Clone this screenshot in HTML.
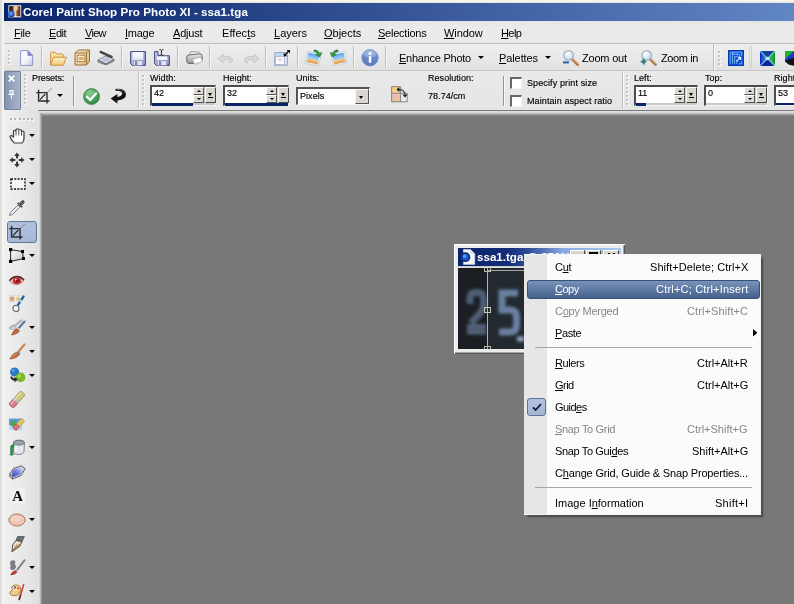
<!DOCTYPE html>
<html>
<head>
<meta charset="utf-8">
<title>Corel Paint Shop Pro Photo XI - ssa1.tga</title>
<style>
html,body{margin:0;padding:0;}
html{width:794px;height:604px;overflow:hidden;}
body{width:794px;height:604px;overflow:hidden;position:relative;background:#787878;font-family:"Liberation Sans",sans-serif;font-size:11px;color:#000;}
.abs{position:absolute;}
svg{position:absolute;overflow:visible;}
.t{position:absolute;white-space:nowrap;line-height:13px;}
.s{position:absolute;white-space:nowrap;line-height:11px;font-size:9px;letter-spacing:0.05px;}
u{text-decoration:underline;text-underline-offset:1px;text-decoration-thickness:1px;}
/* frame */
#frameL{left:0;top:0;width:4px;height:604px;background:linear-gradient(to right,#dcdcdc 0,#e0e0e0 45%,#f6f6f0 55%,#f2f2ec 100%);}
#frameT{left:0;top:0;width:794px;height:3px;background:linear-gradient(#fbf8ee 0,#f4f0e4 50%,#dfe3ee 100%);}
/* title */
#title{left:4px;top:3px;width:790px;height:18px;background:linear-gradient(to right,#0a246a 0%,#6186c4 100%);}
#title .t{left:19px;top:2px;color:#fff;font-weight:bold;font-size:11.6px;line-height:14px;letter-spacing:0.05px;}
/* menu */
#menu{left:4px;top:21px;width:790px;height:23px;background:linear-gradient(#e6e6e6,#ebebeb 30%,#eaeaea);}
#menu .t{top:5.6px;}
/* toolbar */
#tb{left:4px;top:43px;width:790px;height:27px;background:linear-gradient(#bdbdbd 0,#bdbdbd 1px,#eeeeee 1px,#e9e9e9 50%,#e2e2e2 100%);}
.sep{position:absolute;top:46px;width:1px;height:22px;background:#bcbcbc;box-shadow:1px 0 0 #f8f8f8;}
.gripv{position:absolute;width:2px;}
.gripv i{display:block;width:2px;height:2px;background:#c6c6c6;margin-bottom:2px;box-shadow:1px 1px 0 #fcfcfc;}
.griph{position:absolute;height:2px;white-space:nowrap;font-size:0;}
.griph i{display:inline-block;width:2px;height:2px;background:#b4b4b4;margin-right:2.3px;box-shadow:1px 1px 0 #fafafa;}
.arr{position:absolute;width:0;height:0;border-left:3px solid transparent;border-right:3px solid transparent;border-top:3px solid #000;}
/* options */
#opt{left:4px;top:70px;width:790px;height:40px;background:linear-gradient(#c8c8c8 0,#c8c8c8 1px,#e9e9e9 1px,#e5e5e5 100%);}
#handle{left:4px;top:71px;width:17px;height:39px;background:linear-gradient(to right,#8393ae,#9ba8bf 60%,#a9b4c7);border:1px solid #73849f;box-sizing:border-box;border-radius:1px;}
.osep{position:absolute;top:76px;width:1px;height:30px;background:#949494;box-shadow:1px 0 0 #f8f8f8;}
/* numeric field */
.nf{position:absolute;top:85px;height:21px;background:#c8c8c8;box-sizing:border-box;border-top:2px solid #4c4c4c;border-left:2px solid #4c4c4c;border-right:1px solid #f4f4f4;border-bottom:1px solid #f4f4f4;}
.nf .w{position:absolute;left:0;top:0;height:16px;background:#fff;}
.nf .bar{position:absolute;left:0;top:16px;height:3px;background:#0a246a;}
.nf .v{position:absolute;left:2px;top:1px;font-size:9px;line-height:11px;}
.nf .sp{position:absolute;top:0;width:11px;height:7.5px;background:#dedbd4;border:1px solid #fff;border-right-color:#555;border-bottom-color:#555;box-sizing:border-box;}
.nf .sp.d{top:8px;height:8px;}
.nf .dd{position:absolute;top:0;width:11px;height:16px;background:#d8d5ce;border:1px solid #fff;border-right:1.5px solid #444;border-bottom:1.5px solid #444;box-sizing:border-box;}
.tri-u{position:absolute;width:0;height:0;border-left:2px solid transparent;border-right:2px solid transparent;border-bottom:2px solid #000;}
.tri-d{position:absolute;width:0;height:0;border-left:2px solid transparent;border-right:2px solid transparent;border-top:2px solid #000;}
.cb{position:absolute;width:12px;height:12px;background:#fff;box-sizing:border-box;border-top:2px solid #666;border-left:2px solid #666;border-right:1px solid #f4f4f4;border-bottom:1px solid #f4f4f4;}
/* below */
#gap{left:38px;top:111px;width:756px;height:5px;background:linear-gradient(#e4e4e4 0,#d6d6d6 30%,#b0b0b0 60%,#8a8a8a 85%,#787878 100%);}
#left{left:4px;top:110px;width:34px;height:494px;background:linear-gradient(to right,#f0f0f0,#e9e9e9 50%,#e0e0e0);}
#leftE{left:38px;top:113px;width:4px;height:491px;background:linear-gradient(to right,#e8e8e8,#d8d8d8 35%,#acacac 70%,#848484 100%);}
#ws{left:41px;top:115px;width:753px;height:489px;background:#787878;}
#sel{left:7px;top:221px;width:30px;height:22px;background:linear-gradient(#aec0dc,#a6b8d6);border:1px solid #61779a;border-radius:3px;box-sizing:border-box;}
/* child window */
#cw{left:454px;top:244px;width:171px;height:110px;background:#ececec;box-shadow:inset 1px 1px 0 #fff,inset -1px -1px 0 #585858,inset -2px -2px 0 #a8a8a8;}
#cwt{left:458px;top:248px;width:163px;height:18px;overflow:hidden;background:linear-gradient(to right,#0a246a 0%,#142c78 30%,#2c4894 42%,#5070b8 52%,#8aa8e0 64%,#a6caf0 100%);}
#cwt .t{left:19px;top:2px;color:#fff;font-weight:bold;font-size:11.6px;line-height:14px;}
#cwi{left:458px;top:268px;width:163px;height:81px;background:#1a2026;overflow:hidden;}
.wb{position:absolute;top:250px;height:14px;background:#d8d4cc;box-sizing:border-box;border:1px solid #fff;border-right-color:#404040;border-bottom-color:#404040;}
/* context menu */
#cm{left:524px;top:254px;width:237px;height:261px;background:#fbfbfb;box-shadow:2.5px 2.5px 1.5px #505050;border:1px solid #f4f4f4;box-sizing:border-box;}
#cmg{left:524px;top:255px;width:23px;height:259px;background:#e6e6e6;}
#hl{left:527px;top:280px;width:232.5px;height:19px;background:linear-gradient(#7891b7,#617da6 45%,#46628c);border:1px solid #38507a;border-radius:3px;box-sizing:border-box;}
.mi{position:absolute;left:555px;white-space:nowrap;line-height:13px;margin-top:0.6px;}
.mk{position:absolute;right:46px;white-space:nowrap;line-height:13px;text-align:right;margin-top:0.6px;}
.dis{color:#868686;}
.msep{position:absolute;left:535px;width:217px;height:1px;background:#a6a6a6;}
#chk{left:527px;top:398px;width:19px;height:18px;background:linear-gradient(#b4c2dc,#a6b6d2);border:1px solid #5a729a;border-radius:3px;box-sizing:border-box;}
.t,.s,.mi,.mk,.nf .v{will-change:transform;}
.s,.nf .v{-webkit-text-stroke:0.15px #000;}
</style>
</head>
<body>
<div id="ws" class="abs"></div>
<div id="gap" class="abs"></div>
<div id="frameT" class="abs"></div>
<div id="title" class="abs"><span class="t">Corel Paint Shop Pro Photo XI - ssa1.tga</span></div>
<div id="menu" class="abs">
 <span class="t" style="left:10px;letter-spacing:-0.3px"><u>F</u>ile</span>
 <span class="t" style="left:44.5px;letter-spacing:-0.45px"><u>E</u>dit</span>
 <span class="t" style="left:81px;letter-spacing:-0.7px"><u>V</u>iew</span>
 <span class="t" style="left:120.5px;letter-spacing:-0.25px"><u>I</u>mage</span>
 <span class="t" style="left:169.3px;letter-spacing:-0.2px"><u>A</u>djust</span>
 <span class="t" style="left:217.6px;letter-spacing:0.05px">Effec<u>t</u>s</span>
 <span class="t" style="left:269.5px"><u>L</u>ayers</span>
 <span class="t" style="left:319.5px"><u>O</u>bjects</span>
 <span class="t" style="left:374px;letter-spacing:-0.23px"><u>S</u>elections</span>
 <span class="t" style="left:440px;letter-spacing:-0.1px"><u>W</u>indow</span>
 <span class="t" style="left:496.7px;letter-spacing:-0.6px"><u>H</u>elp</span>
</div>
<div id="tb" class="abs"></div>
<svg style="left:7px;top:4.5px" width="15" height="13" viewBox="0 0 15 13"><defs><linearGradient id="gApp" x1="0" y1="0" x2="1" y2="0"><stop offset="0" stop-color="#2a1a12"/><stop offset="0.3" stop-color="#4a2c1c"/><stop offset="0.45" stop-color="#e8c4bc"/><stop offset="0.7" stop-color="#e8cc98"/><stop offset="0.85" stop-color="#7a4a20"/><stop offset="1" stop-color="#5a3414"/></linearGradient><radialGradient id="gOrb" cx="0.45" cy="0.45" r="0.6"><stop offset="0" stop-color="#6aa8ff"/><stop offset="0.6" stop-color="#2a68e8"/><stop offset="1" stop-color="#0c2060"/></radialGradient></defs><rect x="1.4" y="0.3" width="12.8" height="12" fill="#fff"/><rect x="2.2" y="1.1" width="11.2" height="10.2" fill="url(#gApp)"/><rect x="9.4" y="5.2" width="3.6" height="6" fill="#6a3c18" opacity="0.8"/><circle cx="4.3" cy="8.9" r="3.2" fill="url(#gOrb)"/></svg>
<!--TBICONS2-->
<!-- toolbar separators / grips / text -->
<div class="gripv" style="left:8px;top:50px"><i></i><i></i><i></i><i></i></div>
<div class="sep" style="left:41px"></div>
<div class="sep" style="left:121px"></div>
<div class="sep" style="left:177px"></div>
<div class="sep" style="left:209px"></div>
<div class="sep" style="left:265px"></div>
<div class="sep" style="left:297px"></div>
<div class="sep" style="left:353px"></div>
<div class="sep" style="left:385px"></div>
<div class="sep" style="left:713px;top:44px;height:26px"></div>
<div class="gripv" style="left:718px;top:51px"><i></i><i></i><i></i><i></i></div>
<div class="sep" style="left:748.5px;background:#d6d6d6;box-shadow:none"></div><div class="sep" style="left:751px;background:#d0d0d0;box-shadow:none"></div>
<span class="t" id="tEnh" style="left:399px;top:51.7px;letter-spacing:-0.25px"><u>E</u>nhance Photo</span>
<div class="arr" style="left:477.5px;top:55.5px"></div>
<span class="t" id="tPal" style="left:499.3px;top:51.7px;letter-spacing:-0.1px"><u>P</u>alettes</span>
<div class="arr" style="left:544.7px;top:55.5px"></div>
<span class="t" id="tZo" style="left:582.3px;top:51.7px;letter-spacing:-0.2px">Zoom out</span>
<span class="t" id="tZi" style="left:660.5px;top:51.7px;letter-spacing:-0.4px">Zoom in</span>
<svg width="0" height="0" style="position:absolute"><defs>
 <linearGradient id="gPage" x1="0" y1="0" x2="1" y2="1"><stop offset="0" stop-color="#ffffff"/><stop offset="0.5" stop-color="#f8f9fe"/><stop offset="1" stop-color="#c4cbee"/></linearGradient>
 <linearGradient id="gFold" x1="0" y1="0" x2="0" y2="1"><stop offset="0" stop-color="#fdf0c0"/><stop offset="1" stop-color="#f4cc80"/></linearGradient>
 <linearGradient id="gBox" x1="0" y1="0" x2="1" y2="1"><stop offset="0" stop-color="#f8e8c4"/><stop offset="1" stop-color="#d8b478"/></linearGradient>
 <linearGradient id="gFlop" x1="0" y1="0" x2="1" y2="1"><stop offset="0" stop-color="#c4cae8"/><stop offset="1" stop-color="#9098c8"/></linearGradient>
 <linearGradient id="gPrn" x1="0" y1="0" x2="0" y2="1"><stop offset="0" stop-color="#ececec"/><stop offset="1" stop-color="#989898"/></linearGradient>
 <linearGradient id="gInfo" x1="0" y1="0" x2="0" y2="1"><stop offset="0" stop-color="#9cb4e0"/><stop offset="0.5" stop-color="#6888c8"/><stop offset="1" stop-color="#5878bc"/></linearGradient>
 <linearGradient id="gSky" x1="0" y1="0" x2="0" y2="1"><stop offset="0" stop-color="#5aa0e8"/><stop offset="0.55" stop-color="#a8d4f4"/><stop offset="0.6" stop-color="#f0c890"/><stop offset="1" stop-color="#e09850"/></linearGradient>
 <radialGradient id="gGlass" cx="0.4" cy="0.35" r="0.7"><stop offset="0" stop-color="#ffffff"/><stop offset="1" stop-color="#b9d6ee"/></radialGradient>
 <linearGradient id="gHand" x1="0" y1="0" x2="1" y2="1"><stop offset="0" stop-color="#f0c090"/><stop offset="1" stop-color="#b87840"/></linearGradient>
 <radialGradient id="gChk" cx="0.4" cy="0.3" r="0.8"><stop offset="0" stop-color="#8cd098"/><stop offset="0.6" stop-color="#48a058"/><stop offset="1" stop-color="#2e7c3e"/></radialGradient>
</defs></svg>
<!-- new -->
<svg style="left:20px;top:50px" width="14" height="16" viewBox="0 0 14 16"><path d="M0.6 0.6 H7.8 L12.6 5.4 V15.4 H0.6 Z" fill="url(#gPage)" stroke="#8e98c8" stroke-width="1"/><path d="M7.8 0.6 V5.4 H12.6 Z" fill="#8088cc" stroke="#7880c4" stroke-width="0.6"/></svg>
<!-- open -->
<svg style="left:50px;top:51px" width="17" height="15" viewBox="0 0 17 15"><path d="M0.6 14 V2.2 Q0.6 1.2 1.6 1.2 H5.2 L6.8 3 H12.4 Q13.2 3 13.2 3.8 V6" fill="#f8e0a0" stroke="#cf9448" stroke-width="1"/><path d="M0.6 14.2 L3.4 6.2 H16.3 L13.4 14.2 Z" fill="url(#gFold)" stroke="#cf8c40" stroke-width="1"/></svg>
<!-- browse -->
<svg style="left:74px;top:49px" width="17" height="17" viewBox="0 0 17 17"><path d="M1 4 L4.5 1 H15.5 L15.5 12.5 L12.5 16 H1 Z" fill="url(#gBox)" stroke="#9a7236" stroke-width="1"/><path d="M1 4 H12.5 V16 M12.5 4 L15.5 1" fill="none" stroke="#9a7236" stroke-width="0.9"/><rect x="3.2" y="6.2" width="7.6" height="6.4" fill="#f8ecd0" stroke="#a47a3c" stroke-width="0.8"/><rect x="4.8" y="8" width="4.6" height="3" fill="#e8a860"/></svg>
<!-- scanner -->
<svg style="left:97px;top:50px" width="18" height="15" viewBox="0 0 18 15"><path d="M3.5 1 L15.5 6.5 L14.5 8 L2.8 2.4 Z" fill="#50525a" stroke="#2c2e34" stroke-width="0.8"/><path d="M1 10 L8.5 6.2 L17 9.2 L9 13.8 Z" fill="#e8e8ec" stroke="#6c6e78" stroke-width="0.8"/><path d="M1 10 V12 L9 15 L17 11 V9.2 L9 13.8 Z" fill="#9c9ea8" stroke="#5c5e66" stroke-width="0.7"/><path d="M4 10 L8.6 7.6 L13.6 9.4 L9 11.9 Z" fill="#b4c0d8"/></svg>
<!-- save -->
<svg style="left:129.5px;top:51px" width="16" height="15" viewBox="0 0 16 15"><path d="M0.6 0.6 H15.4 V14.4 H2.4 L0.6 12.6 Z" fill="url(#gFlop)" stroke="#30386c" stroke-width="0.9"/><rect x="2.6" y="1" width="10.6" height="7.8" fill="#f4f5fc"/><rect x="2.6" y="6.6" width="10.6" height="2.2" fill="#dfe2f4"/><rect x="3.6" y="9.8" width="8.8" height="4.6" fill="#e2e4f2" stroke="#8088b8" stroke-width="0.5"/><rect x="5" y="10.4" width="2.2" height="3.6" fill="#7880b0"/></svg>
<!-- save as -->
<svg style="left:153.5px;top:49px" width="16" height="17" viewBox="0 0 16 17"><path d="M0.6 2.6 H4 V6.8 H15.4 V16.4 H2.4 L0.6 14.6 Z" fill="url(#gFlop)" stroke="#30386c" stroke-width="0.9"/><rect x="3" y="7.4" width="10.2" height="3.6" fill="#f4f5fc"/><rect x="3.6" y="11.8" width="8.8" height="4.6" fill="#e2e4f2" stroke="#8088b8" stroke-width="0.5"/><rect x="5" y="12.4" width="2.2" height="3.6" fill="#7880b0"/><path d="M5.4 0.7 H6.8 M8 0.7 H9.4 M7.4 1 V6 M5.4 6.3 H6.8 M8 6.3 H9.4" stroke="#111" stroke-width="0.9" fill="none"/></svg>
<!-- print -->
<svg style="left:186px;top:51px" width="17" height="14" viewBox="0 0 17 14"><path d="M4.5 0.8 L12.5 0.8 L15 4 L3 5.5 Z" fill="#f0f0f0" stroke="#808080" stroke-width="0.7"/><path d="M0.8 6 Q0.8 4.2 3 4 L13 2.8 Q16.2 2.8 16.2 5 V9 L11 12.4 H3 Q0.8 12.4 0.8 10 Z" fill="url(#gPrn)" stroke="#5c5c5c" stroke-width="0.9"/><path d="M6.5 8.2 L14.8 6 L16.4 10.4 L8.6 13.4 Z" fill="#fdfdfd" stroke="#a0a0a0" stroke-width="0.7"/></svg>
<!-- undo / redo (disabled) -->
<svg style="left:217px;top:53px" width="17" height="11" viewBox="0 0 17 11"><path d="M0.8 5.8 L6 1 V3.6 Q15 2.4 15.6 7 Q15.8 9.6 12 10 Q14 8.6 12.4 7.2 Q10.4 6 6 7.4 V10 Z" fill="#d9d9d9" stroke="#c2c2c2" stroke-width="0.8"/></svg>
<svg style="left:242.5px;top:53px" width="17" height="11" viewBox="0 0 17 11"><path d="M16.2 5.8 L11 1 V3.6 Q2 2.4 1.4 7 Q1.2 9.6 5 10 Q3 8.6 4.6 7.2 Q6.6 6 11 7.4 V10 Z" fill="#d9d9d9" stroke="#c2c2c2" stroke-width="0.8"/></svg>
<!-- resize -->
<svg style="left:273.5px;top:49px" width="17" height="17" viewBox="0 0 17 17"><rect x="0.8" y="3.6" width="12.6" height="12.6" fill="#dce8f8" stroke="#8c9cc4" stroke-width="0.9"/><rect x="1.4" y="4.2" width="11.4" height="2.6" fill="#bcd0f0"/><rect x="1.6" y="7.4" width="8.8" height="8.2" fill="#fcfcfd" stroke="#a0acc8" stroke-width="0.8"/><path d="M3.4 9.6 L8.4 9.6 L5.9 12.8Z" fill="#d4d4d8"/><path d="M10.4 6.6 L15.4 1.4" stroke="#000" stroke-width="1.3"/><path d="M12.6 1 H16 V4.4 Z M9.8 3.8 V7.2 H13.2 Z" fill="#000"/></svg>
<!-- rotate right -->
<svg style="left:305px;top:49px" width="18" height="17" viewBox="0 0 18 17"><g transform="rotate(12 8 10)"><rect x="1" y="3.6" width="14" height="12" fill="#f4f8fc" stroke="#b4c4d8" stroke-width="0.7"/><rect x="2.2" y="4.8" width="11.6" height="9.6" fill="url(#gSky)"/></g><path d="M9 0.8 Q13.4 1 14.4 4.2 L16.8 3.6 L14.8 8 L10.6 5.6 L12.6 5 Q11.8 2.8 9 2.8 Z" fill="#2f9a3c" stroke="#1e6e2a" stroke-width="0.5"/></svg>
<!-- rotate left -->
<svg style="left:329px;top:49px" width="18" height="17" viewBox="0 0 18 17"><g transform="translate(18,0) scale(-1,1)"><g transform="rotate(12 8 10)"><rect x="1" y="3.6" width="14" height="12" fill="#f4f8fc" stroke="#b4c4d8" stroke-width="0.7"/><rect x="2.2" y="4.8" width="11.6" height="9.6" fill="url(#gSky)"/></g><path d="M9 0.8 Q13.4 1 14.4 4.2 L16.8 3.6 L14.8 8 L10.6 5.6 L12.6 5 Q11.8 2.8 9 2.8 Z" fill="#2f9a3c" stroke="#1e6e2a" stroke-width="0.5"/></g></svg>
<!-- info -->
<svg style="left:361px;top:49px" width="18" height="18" viewBox="0 0 18 18"><circle cx="9" cy="8.8" r="8.2" fill="url(#gInfo)" stroke="#6d89c4" stroke-width="0.8"/><ellipse cx="9" cy="5" rx="6" ry="3.6" fill="#a9bfe6" opacity="0.55"/><rect x="7.8" y="7.2" width="2.5" height="6.6" rx="0.6" fill="#fff"/><circle cx="9" cy="4.6" r="1.5" fill="#fff"/></svg>
<!-- zoom out -->
<svg style="left:561.5px;top:50px" width="17" height="16" viewBox="0 0 17 16"><path d="M9.6 8.6 L15.6 14.6" stroke="#b0703c" stroke-width="2.6" stroke-linecap="round"/><path d="M9.8 8.2 L15 13.4" stroke="#e8b080" stroke-width="0.9" stroke-linecap="round"/><circle cx="6.6" cy="5.4" r="4.8" fill="url(#gGlass)" stroke="#a9b1bd" stroke-width="1.3"/><rect x="1" y="11.4" width="6" height="2" fill="#2a5ea8"/></svg>
<!-- zoom in -->
<svg style="left:640px;top:50px" width="17" height="16" viewBox="0 0 17 16"><path d="M9.6 8.6 L15.6 14.6" stroke="#b0703c" stroke-width="2.6" stroke-linecap="round"/><path d="M9.8 8.2 L15 13.4" stroke="#e8b080" stroke-width="0.9" stroke-linecap="round"/><circle cx="6.6" cy="5.4" r="4.8" fill="url(#gGlass)" stroke="#a9b1bd" stroke-width="1.3"/><path d="M0.8 11.6 H6.4 M3.6 8.8 V14.4" stroke="#1e7a7a" stroke-width="1.9"/></svg>
<!-- circuit icon -->
<svg style="left:728px;top:49.7px" width="16" height="16" viewBox="0 0 16 16"><rect x="0" y="0" width="16" height="16" fill="#0e4cd4"/><rect x="0.4" y="0.4" width="15.2" height="15.2" fill="none" stroke="#0a34a8" stroke-width="0.8"/><path d="M2.2 13.8 V2.2 H13.8 V6 M4.4 13.8 V4.4 H9 M11 4.4 H11.6 V6.4 M6.6 13.8 V6.6 H9.4 L10.6 7.8 M8.8 13.8 V11 M11 13.8 H13.8 V11.4" fill="none" stroke="#7cc0fa" stroke-width="0.9"/><path d="M8.4 11.4 L12.2 7.6 M10 7.4 H12.6 V10" fill="none" stroke="#e4f2ff" stroke-width="1.3"/><circle cx="5" cy="3.4" r="0.7" fill="#b8dcff"/><circle cx="9.6" cy="4.4" r="0.8" fill="#b8dcff"/></svg>
<!-- blue/green X -->
<svg style="left:760px;top:51px" width="15" height="15" viewBox="0 0 15 15"><defs><linearGradient id="gXl" x1="0" y1="0" x2="1" y2="0"><stop offset="0" stop-color="#1420c0"/><stop offset="1" stop-color="#38b8e8"/></linearGradient><linearGradient id="gXr" x1="0" y1="0" x2="1" y2="0"><stop offset="0" stop-color="#48d0a0"/><stop offset="1" stop-color="#109018"/></linearGradient></defs><rect width="15" height="15" fill="#0c2090"/><path d="M0 0 L7.5 7.5 L15 0 Z" fill="#104098"/><path d="M0 15 L7.5 7.5 L15 15 Z" fill="#0c2494"/><path d="M0 0 L7.5 7.5 L0 15 Z" fill="url(#gXl)"/><path d="M15 0 L7.5 7.5 L15 15 Z" fill="url(#gXr)"/><path d="M0 0 L15 15 M15 0 L0 15" stroke="#8cf0f8" stroke-width="1.2" opacity="0.75"/><circle cx="7.5" cy="7.5" r="1.8" fill="#e0ffff" opacity="0.85"/></svg>
<!-- third icon (cropped) -->
<svg style="left:785px;top:50.5px" width="9" height="15" viewBox="0 0 9 15"><rect x="0" y="0" width="12" height="10.5" fill="#1838d0"/><path d="M0 0 H9 L0 8 Z" fill="#20b030"/><path d="M0 10 L4 8 L12 6 V15 Q4 15 0 10.5 Z" fill="#10141c"/></svg>


<div id="opt" class="abs"></div>
<div id="handle" class="abs"></div>
<!-- options bar -->
<svg style="left:8px;top:75px" width="7" height="7" viewBox="0 0 7 7"><path d="M0.7 0.7 L6.3 6.3 M6.3 0.7 L0.7 6.3" stroke="#fff" stroke-width="1.7" fill="none"/></svg>
<svg style="left:8px;top:90px" width="7" height="9" viewBox="0 0 7 9"><path d="M1.5 0.5 H5.5 M2 0.5 V4 M5 0.5 V4 M4 0.5 V4 M0.5 4.5 H6.5 M3.5 4.5 V8.5" stroke="#fff" stroke-width="1" fill="none"/></svg>
<div class="gripv" style="left:24px;top:74px"><i></i><i></i><i></i><i></i><i></i><i></i><i></i><i></i></div>
<span class="s" id="sPre" style="left:31.5px;top:73px;letter-spacing:-0.1px">Presets:</span>
<div class="arr" style="left:56.5px;top:94px"></div>
<div class="osep" style="left:73px"></div>
<div class="sep" style="left:138px;top:71px;height:37px;background:#c0c0c0"></div>
<div class="gripv" style="left:142px;top:75px"><i></i><i></i><i></i><i></i><i></i><i></i><i></i><i></i></div>
<span class="s" id="sWid" style="left:150px;top:73px">Width:</span>
<div class="nf" style="left:150px;width:66px"><div class="w" style="width:41px"></div><div class="bar" style="width:41px"></div><span class="v">42</span>
 <div class="sp" style="left:41px"><div class="tri-u" style="left:2.5px;top:2px"></div></div><div class="sp d" style="left:41px"><div class="tri-d" style="left:2.5px;top:2px"></div></div>
 <div class="dd" style="left:53px"><div class="tri-d" style="left:2px;top:5px;border-left-width:2.5px;border-right-width:2.5px;border-top-width:3px"></div><div class="abs" style="left:2px;top:9px;width:5px;height:1px;background:#000"></div></div></div>
<span class="s" id="sHei" style="left:223px;top:73px">Height:</span>
<div class="nf" style="left:223px;width:66px"><div class="w" style="width:41px"></div><div class="bar" style="width:63px"></div><span class="v">32</span>
 <div class="sp" style="left:41px"><div class="tri-u" style="left:2.5px;top:2px"></div></div><div class="sp d" style="left:41px"><div class="tri-d" style="left:2.5px;top:2px"></div></div>
 <div class="dd" style="left:53px"><div class="tri-d" style="left:2px;top:5px;border-left-width:2.5px;border-right-width:2.5px;border-top-width:3px"></div><div class="abs" style="left:2px;top:9px;width:5px;height:1px;background:#000"></div></div></div>
<span class="s" id="sUni" style="left:296px;top:73px">Units:</span>
<div class="abs" style="left:296px;top:87px;width:74px;height:18px;background:#fff;box-sizing:border-box;border-top:2px solid #555;border-left:2px solid #555;border-right:1px solid #f4f4f4;border-bottom:1px solid #f4f4f4;">
 <span class="s" id="sPix" style="left:2px;top:2.2px">Pixels</span>
 <div class="abs" style="left:57px;top:0;width:14px;height:15px;background:#d9d6cf;border:1px solid #f4f4f4;border-right-color:#555;border-bottom-color:#555;box-sizing:border-box"><div class="tri-d" style="left:3px;top:6px;border-left-width:2.5px;border-right-width:2.5px;border-top-width:3px"></div></div>
</div>
<span class="s" id="sRes" style="left:427.5px;top:73px">Resolution:</span>
<span class="s" id="sRv" style="left:427.5px;top:91px">78.74/cm</span>
<div class="osep" style="left:503px"></div>
<div class="cb" style="left:510px;top:77px"></div>
<div class="cb" style="left:510px;top:95px"></div>
<span class="s" id="sSpe" style="left:526.5px;top:78px;letter-spacing:0.12px">Specify print size</span>
<span class="s" id="sMai" style="left:526.5px;top:96px;letter-spacing:0.1px">Maintain aspect ratio</span>
<div class="sep" style="left:622px;top:71px;height:37px;background:#c0c0c0"></div>
<div class="gripv" style="left:626px;top:75px"><i></i><i></i><i></i><i></i><i></i><i></i><i></i><i></i></div>
<span class="s" id="sLef" style="left:634px;top:73px">Left:</span>
<div class="nf" style="left:634px;width:64px"><div class="w" style="width:38px"></div><div class="bar" style="width:10px"></div><span class="v">11</span>
 <div class="sp" style="left:38px"><div class="tri-u" style="left:2.5px;top:2px"></div></div><div class="sp d" style="left:38px"><div class="tri-d" style="left:2.5px;top:2px"></div></div>
 <div class="dd" style="left:50px"><div class="tri-d" style="left:2px;top:5px;border-left-width:2.5px;border-right-width:2.5px;border-top-width:3px"></div><div class="abs" style="left:2px;top:9px;width:5px;height:1px;background:#000"></div></div></div>
<span class="s" id="sTop" style="left:704.5px;top:73px">Top:</span>
<div class="nf" style="left:704px;width:64px"><div class="w" style="width:38px"></div><span class="v">0</span>
 <div class="sp" style="left:38px"><div class="tri-u" style="left:2.5px;top:2px"></div></div><div class="sp d" style="left:38px"><div class="tri-d" style="left:2.5px;top:2px"></div></div>
 <div class="dd" style="left:50px"><div class="tri-d" style="left:2px;top:5px;border-left-width:2.5px;border-right-width:2.5px;border-top-width:3px"></div><div class="abs" style="left:2px;top:9px;width:5px;height:1px;background:#000"></div></div></div>
<span class="s" id="sRig" style="left:774px;top:73px;width:20px;overflow:hidden">Right:</span>
<div class="nf" style="left:774px;width:20px;border-right:0;overflow:hidden"><div class="w" style="width:38px"></div><div class="bar" style="width:38px"></div><span class="v">53</span></div>
<!-- crop preset icon -->
<svg style="left:36px;top:88px" width="16" height="16" viewBox="0 0 16 16"><path d="M2.6 1.8 V13 H13.6 M0.2 4.6 H11 V15.4" fill="none" stroke="#2c2c2c" stroke-width="1.4"/><path d="M4 11.6 L9.4 6" stroke="#222" stroke-width="1.1"/><path d="M11.4 4.2 L15.8 0.2" stroke="#70747c" stroke-width="0.8"/></svg>
<!-- green check -->
<svg style="left:82.5px;top:87.5px" width="17" height="17" viewBox="0 0 17 17"><circle cx="8.5" cy="8.5" r="7.9" fill="url(#gChk)" stroke="#2e7e3e" stroke-width="0.8"/><path d="M4 8.8 L7.2 12 L13 5.4" fill="none" stroke="#fff" stroke-width="2.3" stroke-linecap="round" stroke-linejoin="round"/></svg>
<!-- reset arrow -->
<svg style="left:110px;top:88px" width="17" height="16" viewBox="0 0 17 16"><path d="M5.4 1 Q15.8 0 16 6.4 Q15.8 11.6 7.4 12.4 V15.6 L0.6 10.6 L7.4 6 V9 Q12 8.4 12.2 5.6 Q12 2.4 5.4 2.8 Z" fill="#111"/><path d="M7 1.5 Q14.6 1 15.2 5.6" fill="none" stroke="#8c8c8c" stroke-width="0.8"/></svg>
<!-- resize/resolution icon -->
<svg style="left:390.5px;top:85.5px" width="17" height="16.5" viewBox="0 0 17 16.5"><defs><linearGradient id="gOr" x1="0" y1="0" x2="1" y2="1"><stop offset="0" stop-color="#f8c468"/><stop offset="1" stop-color="#f4e49c"/></linearGradient><linearGradient id="gPk" x1="0" y1="0" x2="0.6" y2="1"><stop offset="0" stop-color="#f4b8bc"/><stop offset="1" stop-color="#e8c49c"/></linearGradient></defs><rect x="0.6" y="0.6" width="9" height="6.6" fill="url(#gOr)"/><rect x="0.6" y="7.2" width="9" height="8.6" fill="url(#gPk)"/><rect x="9.6" y="7.2" width="6.6" height="8.6" fill="#e4f0e4"/><path d="M0.6 0.6 H9.6 V7.2 H16.2 V15.8 H0.6 Z M0.6 7.2 H9.6 V15.8" fill="none" stroke="#7c7c84" stroke-width="0.9"/><path d="M7.6 3.6 Q13.6 3.4 14 8.6" fill="none" stroke="#3c4450" stroke-width="1.3"/><path d="M5.4 3.6 L8.4 1 V6.2 Z M14 11.6 L11.4 8.4 H16.6 Z" fill="#1c2028"/></svg>


<div id="left" class="abs"></div>
<div id="leftE" class="abs"></div>
<div id="sel" class="abs"></div>
<div class="griph" style="left:10px;top:118px"><i></i><i></i><i></i><i></i><i></i><i></i></div>
<!-- 1 hand -->
<svg style="left:8.6px;top:128px" width="20" height="16" viewBox="0 0 16 16" preserveAspectRatio="none"><path d="M4.2 15 Q1.4 11.4 0.8 8.6 Q0.8 7.4 1.8 7.4 Q2.8 7.6 3.6 9.6 V3.4 Q3.6 2.2 4.6 2.2 Q5.6 2.2 5.6 3.4 V2 Q5.6 0.8 6.7 0.8 Q7.8 0.8 7.8 2 V2.6 Q7.8 1.5 8.9 1.5 Q10 1.5 10 2.8 V4 Q10 3 11 3 Q12 3 12 4.2 V10.4 Q12 13.4 10.4 15 Z" fill="#fff" stroke="#3c3c3c" stroke-width="1"/><path d="M5.6 3.4 V7.4 M7.8 2.6 V7.4 M10 4 V7.6" stroke="#3c3c3c" stroke-width="0.8"/></svg>
<div class="arr" style="left:29px;top:134px"></div>
<!-- 2 move -->
<svg style="left:9px;top:152px" width="16" height="16" viewBox="0 0 16 16"><path d="M8 0.4 L10.8 4 H9 V7 H12 V5.2 L15.6 8 L12 10.8 V9 H9 V12 H10.8 L8 15.6 L5.2 12 H7 V9 H4 V10.8 L0.4 8 L4 5.2 V7 H7 V4 H5.2 Z" fill="#3a3a3a"/><rect x="6.4" y="6.4" width="3.2" height="3.2" fill="#ececec"/></svg>
<div class="arr" style="left:29px;top:158px"></div>
<!-- 3 selection -->
<svg style="left:9.5px;top:178px" width="16" height="12" viewBox="0 0 16 12"><rect x="1" y="1" width="14" height="10" fill="#f6f6f6" stroke="#111" stroke-width="1.4" stroke-dasharray="2 1.3"/></svg>
<div class="arr" style="left:29px;top:182px"></div>
<!-- 4 eyedropper -->
<svg style="left:9px;top:200px" width="16" height="16" viewBox="0 0 16 16"><path d="M0.6 15.4 L1.4 12.6 L9 5 L11 7 L3.4 14.6 Z" fill="#e8eaee" stroke="#70747c" stroke-width="0.9"/><path d="M8.4 3.6 L12.4 7.6 L13.4 6.6 L12.4 5.6 L15 3 Q15.8 1.4 14.6 0.6 Q13.4 0 12.6 1 L10.4 3.6 L9.4 2.6 Z" fill="#5c5e66" stroke="#3a3c42" stroke-width="0.6"/></svg>
<!-- 5 crop -->
<svg style="left:9.3px;top:224.2px" width="16" height="16" viewBox="0 0 16 16"><path d="M2.6 1.8 V13 H13.6 M0.2 4.6 H11 V15.4" fill="none" stroke="#2c2c2c" stroke-width="1.4"/><path d="M4 11.6 L9.4 6" stroke="#222" stroke-width="1.1"/><path d="M11.4 4.2 L15.8 0.2" stroke="#70747c" stroke-width="0.8"/></svg>
<!-- 6 deform -->
<svg style="left:9px;top:248px" width="16" height="15" viewBox="0 0 16 15"><defs><linearGradient id="gDef" x1="0" y1="0" x2="1" y2="1"><stop offset="0" stop-color="#ffffff"/><stop offset="1" stop-color="#c4c4c4"/></linearGradient></defs><path d="M1.6 1.6 L13.4 3.6 L14.6 10.6 L1.6 13.4 Z" fill="url(#gDef)" stroke="#222" stroke-width="1"/><rect x="0" y="0" width="3.2" height="3.2" fill="#000"/><rect x="12" y="2" width="3" height="3" fill="#000"/><rect x="13" y="9" width="3" height="3" fill="#000"/><rect x="0" y="11.8" width="3.2" height="3.2" fill="#000"/></svg>
<div class="arr" style="left:29px;top:254px"></div>
<!-- 7 red eye -->
<svg style="left:8.8px;top:276px" width="15.4" height="9.4" viewBox="0 0 16 11" preserveAspectRatio="none"><path d="M0.4 5.6 Q4 0.8 8.6 1 Q12.6 1.2 15.6 5 Q12 10 8 10 Q3.6 10 0.4 5.6 Z" fill="#f0d4cc" stroke="#a85c50" stroke-width="0.9"/><ellipse cx="8.2" cy="5.6" rx="4.4" ry="3.9" fill="#c02c2c"/><circle cx="8.4" cy="5.6" r="1.7" fill="#701414"/><circle cx="7" cy="4.2" r="1" fill="#f8e8e8"/><path d="M0.4 5.4 Q4 0.4 8.6 0.6 Q12.6 0.8 15.6 4.8" fill="none" stroke="#5c2424" stroke-width="1.7"/></svg>
<!-- 8 makeover -->
<svg style="left:9px;top:295px" width="16" height="17" viewBox="0 0 16 17"><rect x="0.4" y="0.8" width="12.4" height="6" fill="#f2f2f4" stroke="#c0c4d0" stroke-width="0.5"/><circle cx="3.2" cy="3.8" r="2.5" fill="#d8a878"/><circle cx="9.2" cy="3.8" r="2.4" fill="#ecc8a0"/><circle cx="9.8" cy="4.6" r="1.1" fill="#a8c870"/><path d="M7.4 12.4 L14.6 1.4" stroke="#1c5c98" stroke-width="2.3" stroke-linecap="round"/><path d="M11 6.8 L12.2 5" stroke="#d8e4f0" stroke-width="2.3"/><circle cx="7" cy="13.4" r="3" fill="#fafafa" stroke="#70747c" stroke-width="1.2"/></svg>
<!-- 9 clone brush -->
<svg style="left:9px;top:319px" width="17" height="17" viewBox="0 0 17 17"><path d="M1 9 Q3 6.4 6 6.8 L12.4 1.4" fill="none" stroke="#b4b4b8" stroke-width="2.4" stroke-linecap="round"/><path d="M1 9.6 Q2.4 12 6 10.4 Q8 9 6.4 6.8 Q3 6.4 1 9.6Z" fill="#d0d0d4" stroke="#a0a0a4" stroke-width="0.5"/><path d="M9.6 9.2 L15.6 2.6" stroke="#5c7ca8" stroke-width="2.2" stroke-linecap="round"/><path d="M8 9.4 L10.6 11.8" stroke="#e4e4ea" stroke-width="2.4"/><path d="M2.6 16 Q4.4 11.2 8 9.6 L10.4 11.8 Q9 15 2.6 16 Z" fill="#c06838" stroke="#8a4420" stroke-width="0.6"/></svg>
<div class="arr" style="left:29px;top:326px"></div>
<!-- 10 paint brush -->
<svg style="left:9px;top:343px" width="17" height="17" viewBox="0 0 17 17"><path d="M9.6 8.6 L15.4 1.6" stroke="#d08858" stroke-width="2.4" stroke-linecap="round"/><path d="M8 9 L10.8 11.6" stroke="#7c98b8" stroke-width="2.8"/><path d="M0.8 16 Q3.4 10.6 7.4 9.2 L10 11.6 Q8.4 15.4 0.8 16 Z" fill="#c8703c" stroke="#8a4420" stroke-width="0.6"/><path d="M2.6 14.8 Q5 11.6 7.6 10.4" stroke="#e8a070" stroke-width="0.8" fill="none"/></svg>
<div class="arr" style="left:29px;top:350px"></div>
<!-- 11 color changer -->
<svg style="left:9px;top:367px" width="17" height="16" viewBox="0 0 17 16"><circle cx="5.6" cy="5" r="4.6" fill="#2c78c4"/><circle cx="4.4" cy="3.6" r="1.6" fill="#6ca8e4" opacity="0.8"/><circle cx="11.6" cy="10.4" r="4.8" fill="#7cb82c"/><circle cx="10.4" cy="9" r="1.8" fill="#b0dc64" opacity="0.8"/><path d="M1.4 9.6 Q1.6 13.4 5.4 13.6 V15.6 L8.8 12.6 L5.4 9.8 V11.6 Q3.4 11.4 3.2 9.6 Z" fill="#2a2a2a"/></svg>
<div class="arr" style="left:29px;top:374px"></div>
<!-- 12 eraser -->
<svg style="left:9px;top:391px" width="16" height="17" viewBox="0 0 16 17"><g transform="rotate(-48 8 8.5)"><rect x="-1" y="5.4" width="18" height="6.2" rx="1.4" fill="#cfc878" stroke="#8c8848" stroke-width="0.6"/><rect x="-1" y="5.4" width="7" height="6.2" rx="1.8" fill="#dc7c8c" stroke="#a05060" stroke-width="0.6"/><rect x="5.4" y="5.4" width="2.4" height="6.2" fill="#b8b8c0"/><rect x="0" y="6.2" width="16" height="1.4" fill="#fff" opacity="0.45"/></g></svg>
<!-- 13 background eraser -->
<svg style="left:9px;top:416px" width="16" height="16" viewBox="0 0 16 16"><rect x="0" y="2.6" width="12.4" height="11.4" fill="#5a98e8"/><rect x="0" y="9" width="12.4" height="5" fill="#b8d8f8"/><circle cx="4.6" cy="7.4" r="3.2" fill="#48a858"/><g transform="rotate(-48 10 8)"><rect x="3" y="5.8" width="13" height="4.6" rx="1.2" fill="#d8c868" stroke="#8c8040" stroke-width="0.5"/><rect x="3" y="5.8" width="5.4" height="4.6" rx="1.4" fill="#e07080" stroke="#a04858" stroke-width="0.5"/></g></svg>
<!-- 14 flood fill -->
<svg style="left:9px;top:439px" width="17" height="17" viewBox="0 0 17 17"><path d="M4.4 4.4 Q4.4 1.4 9.4 1.2 Q15 1 15.4 3.6 L15 12.4 Q14.6 15.2 9.6 15.4 Q5 15.4 4.6 13 Z" fill="#e4e8ee" stroke="#6c7078" stroke-width="0.9"/><ellipse cx="9.9" cy="3.8" rx="5.4" ry="2.4" fill="#9ca4b0" stroke="#5c6068" stroke-width="0.7"/><path d="M5 5.6 Q1.2 5.4 1.4 9 L1.6 15.6 H0.4 L3 16.6 L5 15 H3.8 L3.8 9 Q3.8 7.2 5.4 7.4 Z" fill="#2a9048" stroke="#1c6c34" stroke-width="0.4"/><path d="M7 6.4 V13.6" stroke="#fff" stroke-width="1.6" opacity="0.7"/></svg>
<div class="arr" style="left:29px;top:446px"></div>
<!-- 15 picture tube -->
<svg style="left:9px;top:465px" width="17" height="15" viewBox="0 0 17 15"><path d="M0.8 9 L4.4 3.4 L12.6 0.8 L16.2 3.8 L12 10.6 L3.6 14 L0.8 11.6 Z" fill="#c8ccd8" stroke="#50545c" stroke-width="0.9"/><defs><linearGradient id="gTube" x1="0" y1="1" x2="1" y2="0"><stop offset="0" stop-color="#3840b8"/><stop offset="0.5" stop-color="#7880e0"/><stop offset="1" stop-color="#f0f0fc"/></linearGradient></defs><path d="M4 5 L12 2.2 L14.4 4.2 L11 9.6 L4.6 12 L2.8 10 Z" fill="url(#gTube)"/><path d="M0.8 9 L3.6 11.6 L3.6 14" fill="none" stroke="#50545c" stroke-width="0.8"/></svg>
<!-- 16 text -->
<svg style="left:9.5px;top:488px;will-change:transform" width="15" height="15.5" viewBox="0 0 15 15.5"><rect x="0" y="0" width="15" height="15.5" rx="1.6" fill="#f1f1f2"/><text x="7.5" y="13" text-anchor="middle" font-family="Liberation Serif" font-weight="bold" font-size="14.8" fill="#0c0c0c">A</text></svg>
<!-- 17 ellipse -->
<svg style="left:8px;top:512.5px" width="18" height="14" viewBox="0 0 18 14"><ellipse cx="9" cy="7" rx="8.2" ry="6" fill="#ecc4b4" stroke="#b0745c" stroke-width="1"/><ellipse cx="8" cy="5.6" rx="5.4" ry="3" fill="#f4d8cc" opacity="0.7"/></svg>
<div class="arr" style="left:29px;top:518px"></div>
<!-- 18 pen -->
<svg style="left:10.5px;top:536px" width="14" height="16" viewBox="0 0 14 16"><path d="M6.6 0.6 H13.4 L11 5.6 L5 4.4 Z" fill="#6c7078" stroke="#3c4048" stroke-width="0.7"/><path d="M5 4.4 L11 5.6 L8.6 10.6 L1 15.6 L1.6 9 Z" fill="#e8e0d0" stroke="#4a3a28" stroke-width="0.9"/><path d="M1 15.6 L6.4 8.6" stroke="#4a3a28" stroke-width="0.8"/><path d="M3 13.6 L9 7.4 L10 5.6 L8.6 10.6 L1 15.6Z" fill="#b07838"/></svg>
<!-- 19 warp brush -->
<svg style="left:9px;top:559px" width="17" height="17" viewBox="0 0 17 17"><path d="M2.4 1.6 Q5.4 0.4 6.4 2.6 Q6.8 4.4 5.6 5.4 Q7.6 6 7 8.4 Q6.4 10.6 3.6 11.2 Q1.2 11 1 9 Q1 7.6 2 6.8 Q0.8 5.8 1 4 Q1.2 2.4 2.4 1.6Z" fill="#7c7e86"/><path d="M7.6 11.6 L15.6 1.2" stroke="#80848c" stroke-width="2" stroke-linecap="round"/><path d="M6.4 11.4 L8.4 13" stroke="#d4d4dc" stroke-width="2.2"/><path d="M1.6 16 Q3.2 12.6 6.2 11.6 L8 13 Q6.6 15.6 1.6 16Z" fill="#c43c3c" stroke="#7a2020" stroke-width="0.5"/></svg>
<div class="arr" style="left:29px;top:566px"></div>
<!-- 20 art media -->
<svg style="left:9px;top:584px" width="16" height="16" viewBox="0 0 16 16"><path d="M6.6 1 Q11.6 1.2 11.8 5.2 Q11.8 9.4 8 11.2 Q4 12.6 1.6 10.6 Q0 8.8 1.4 7.6 Q3 7 3.4 5.6 Q2 3.4 3.6 2 Q4.8 1 6.6 1Z" fill="#f0d8a0" stroke="#a87828" stroke-width="1"/><circle cx="4.6" cy="9" r="1.3" fill="#fff" stroke="#a87828" stroke-width="0.5"/><circle cx="6" cy="3.4" r="1.1" fill="#3860c8"/><circle cx="9.2" cy="4.4" r="1.1" fill="#d83838"/><circle cx="8.8" cy="8" r="1.1" fill="#e8c020"/><path d="M14.6 0.6 L11.4 11.8" stroke="#c84838" stroke-width="1.6" stroke-linecap="round"/><path d="M11.4 11.4 L10.2 15.4" stroke="#6c3018" stroke-width="1.8" stroke-linecap="round"/></svg>
<div class="arr" style="left:29px;top:590px"></div>

<div id="frameL" class="abs"></div>
<div id="cw" class="abs"></div>
<div id="cwt" class="abs"><span class="t">ssa1.tga @ 250%</span></div>
<svg style="left:459.5px;top:248.5px" width="16" height="16" viewBox="0 0 16 16"><path d="M3.4 0.4 H10.4 L14.8 4.8 V15.4 H3.4 Z" fill="#f4f6fa" stroke="#c4cce0" stroke-width="0.6"/><path d="M10.4 0.4 V4.8 H14.8" fill="#d4dcee"/><circle cx="5.4" cy="8.2" r="4.9" fill="#0c2c6c"/><circle cx="5.4" cy="8.2" r="3.4" fill="#1a58c8"/><circle cx="4.6" cy="7.2" r="1.6" fill="#58a8f0"/></svg>
<div class="wb" style="left:570px;width:15px"></div>
<div class="wb" style="left:586px;width:15px"><div class="abs" style="left:2px;top:1px;width:9px;height:3px;background:#000"></div></div>
<div class="wb" style="left:603px;width:16px"><div class="abs" style="left:4px;top:2px;width:2px;height:2px;background:#000"></div><div class="abs" style="left:9px;top:2px;width:2px;height:2px;background:#000"></div></div>
<div class="abs" style="left:458px;top:266px;width:163px;height:2px;background:linear-gradient(#c0c0c0,#e8e8e8)"></div>
<div id="cwi" class="abs">
 <svg style="left:0;top:-1px" width="163" height="82" viewBox="0 0 163 82">
  <defs><filter id="bl" x="-20%" y="-20%" width="140%" height="140%"><feGaussianBlur stdDeviation="1.5"/></filter></defs>
  <rect width="163" height="82" fill="#1b1f23"/>
  <rect x="30" y="0" width="133" height="82" fill="#222a30"/>
  <g filter="url(#bl)">
  <path d="M12 37 V31.5 Q12 25.5 17.5 25.5 H19.5 Q25.5 25.5 25.5 31.5 V38 Q25.5 43 20.5 48 L13 56" fill="none" stroke="#4e5d74" stroke-width="7"/>
  <path d="M9 59.5 H28 M9 65 H28" fill="none" stroke="#53637a" stroke-width="5"/>
  <path d="M60 26 H44 V43 H52 Q58.5 43 58.5 49.5 V58 Q58.5 65 52 65 H41" fill="none" stroke="#6a80a0" stroke-width="7"/>
  <rect x="59" y="69.5" width="7" height="5" fill="#93a3c4"/>
  </g>
 </svg>
 <div class="abs" style="left:29.3px;top:0;width:1px;height:82px;background:#b4b4b0"></div>
 <div class="abs" style="left:30px;top:1.6px;width:133px;height:1px;background:#a8a8a8"></div>
 <div class="abs" style="left:26.3px;top:-1.6px;width:6.5px;height:6px;border:1px solid #b8b8a8;box-sizing:border-box"></div>
 <div class="abs" style="left:26.3px;top:38.5px;width:6.5px;height:6.5px;border:1px solid #c8c8b4;box-sizing:border-box"></div>
 <div class="abs" style="left:26.3px;top:78px;width:6.5px;height:5px;border:1px solid #b8b8a8;box-sizing:border-box"></div>
</div>
<div id="cm" class="abs"></div>
<div id="cmg" class="abs"></div>
<div id="hl" class="abs"></div>
<div id="chk" class="abs"><svg style="left:4px;top:4px" width="10" height="9" viewBox="0 0 10 9"><path d="M1 4.4 L3.6 7 L9 1.2" fill="none" stroke="#0c1c4c" stroke-width="1.8"/></svg></div>
<span class="mi" style="top:260px;letter-spacing:-0.3px">C<u>u</u>t</span><span class="mk" style="top:260px;letter-spacing:0.06px;right:45.9px">Shift+Delete; Ctrl+X</span>
<span class="mi" style="top:282px;color:#fff;letter-spacing:-0.5px"><u>C</u>opy</span><span class="mk" style="top:282px;color:#fff;letter-spacing:0.2px;right:45.8px">Ctrl+C; Ctrl+Insert</span>
<span class="mi dis" style="top:304px;letter-spacing:-0.25px">C<u>o</u>py Merged</span><span class="mk dis" style="top:304px;letter-spacing:0.1px">Ctrl+Shift+C</span>
<span class="mi" style="top:326px;letter-spacing:-0.4px"><u>P</u>aste</span>
<svg style="left:753px;top:329px" width="5" height="8" viewBox="0 0 5 8"><path d="M0 0 L4.4 3.8 L0 7.6 Z" fill="#000"/></svg>
<div class="msep" style="top:347px"></div>
<span class="mi" style="top:356px;letter-spacing:-0.4px"><u>R</u>ulers</span><span class="mk" style="top:356px">Ctrl+Alt+R</span>
<span class="mi" style="top:378px;letter-spacing:-0.55px"><u>G</u>rid</span><span class="mk" style="top:378px">Ctrl+Alt+G</span>
<span class="mi" style="top:400px;letter-spacing:-0.55px">Guid<u>e</u>s</span>
<span class="mi dis" style="top:422px;letter-spacing:-0.33px"><u>S</u>nap To Grid</span><span class="mk dis" style="top:422px">Ctrl+Shift+G</span>
<span class="mi" style="top:444px;letter-spacing:-0.36px">Snap To Gui<u>d</u>es</span><span class="mk" style="top:444px">Shift+Alt+G</span>
<span class="mi" style="top:466px;letter-spacing:-0.165px">C<u>h</u>ange Grid, Guide &amp; Snap Properties...</span>
<div class="msep" style="top:487px"></div>
<span class="mi" style="top:496px">Image I<u>n</u>formation</span><span class="mk" style="top:496px;letter-spacing:0.25px;right:45.8px">Shift+I</span>

</body>
</html>
